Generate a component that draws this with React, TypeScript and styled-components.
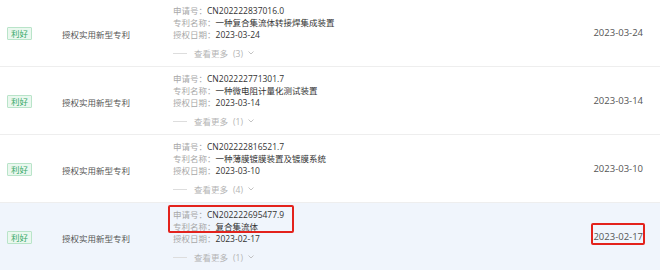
import React from 'react'
import styled, { createGlobalStyle } from 'styled-components'

const GlobalStyle = createGlobalStyle`
  html, body {
    margin: 0;
    padding: 0;
    background: #ffffff;
  }
  body {
    font-family: "Open Sans", "Noto Sans CJK SC", sans-serif;
    overflow: hidden;
  }
`

type Patent = {
  appNo: string
  name: string
  date: string
  more: number
  marked?: boolean
}

const patents: Patent[] = [
  { appNo: 'CN202222837016.0', name: '一种复合集流体转接焊集成装置', date: '2023-03-24', more: 3 },
  { appNo: 'CN202222771301.7', name: '一种微电阻计量化测试装置', date: '2023-03-14', more: 1 },
  { appNo: 'CN202222816521.7', name: '一种薄膜镀膜装置及镀膜系统', date: '2023-03-10', more: 4 },
  { appNo: 'CN202222695477.9', name: '复合集流体', date: '2023-02-17', more: 1, marked: true },
]

const List = styled.div`
  margin-top: -1px;
  width: 660px;
`

const Row = styled.div<{ $active?: boolean }>`
  display: grid;
  grid-template-columns: 55px 111px 1fr auto;
  align-items: center;
  height: 68px;
  box-sizing: border-box;
  padding: 0 17px 0 7px;
  border-bottom: 1px solid ${p => (p.$active ? 'transparent' : '#eeeeee')};
  background: ${p => (p.$active ? '#f0f5fc' : '#ffffff')};
`

const Tag = styled.span`
  justify-self: start;
  display: inline-block;
  width: 25px;
  height: 13px;
  box-sizing: border-box;
  border: 1px solid #b9e4c9;
  border-radius: 1px;
  background: #eaf8ef;
  color: #3aaa6a;
  font-size: 8.5px;
  line-height: 11px;
  text-align: center;
  margin-top: 1px;
`

const TypeText = styled.span`
  color: #555555;
  font-size: 8.5px;
  margin-top: 1px;
`

const Detail = styled.div`
  display: flex;
  flex-direction: column;
  padding: 6px 0 8px;
`

const Line = styled.div`
  height: 12px;
  line-height: 12px;
  font-size: 8.5px;
  color: #333333;
  white-space: nowrap;
`

const Label = styled.span`
  color: #a8a8a8;
`

const Mark = styled.div`
  align-self: flex-start;
  border: 2px solid #e3221c;
  border-radius: 2px;
  margin: -4px 0 0 -5px;
  padding: 2px 3px 0 3px;
  height: 28px;
  box-sizing: border-box;
  width: 126px;
`

const More = styled.div`
  display: flex;
  align-items: center;
  margin-top: 6px;
  height: 12px;
  font-size: 8.5px;
  color: #b4b4b4;
`

const Rule = styled.span`
  width: 14px;
  height: 1px;
  background: #dddddd;
  margin-right: 7px;
`

const Count = styled.span`
  margin-left: 5px;
`

const Chevron = styled.svg`
  margin-left: 5px;
  width: 6px;
  height: 4px;
`

const DateText = styled.span<{ $marked?: boolean }>`
  font-size: 9.5px;
  color: #555555;
  line-height: 12px;
  ${p =>
    p.$marked &&
    `
    border: 2px solid #e3221c;
    border-radius: 2px;
    padding-top: 6px;
    margin: -6px -2px 0 0;
  `}
`

const PatentLines = ({ p }: { p: Patent }) => {
  const head = (
    <>
      <Line>
        <Label>申请号：</Label>
        {p.appNo}
      </Line>
      <Line>
        <Label>专利名称：</Label>
        {p.name}
      </Line>
    </>
  )

  return (
    <Detail>
      {p.marked ? <Mark>{head}</Mark> : head}
      <Line>
        <Label>授权日期：</Label>
        {p.date}
      </Line>
      <More>
        <Rule />
        查看更多
        <Count>({p.more})</Count>
        <Chevron viewBox="0 0 6 4">
          <polyline points="0.5,0.5 3,3 5.5,0.5" fill="none" stroke="#bdbdbd" strokeWidth="0.9" />
        </Chevron>
      </More>
    </Detail>
  )
}

const App = () => {
  return (
    <>
      <GlobalStyle />
      <List>
        {patents.map(p => (
          <Row key={p.appNo} $active={p.marked}>
            <Tag>利好</Tag>
            <TypeText>授权实用新型专利</TypeText>
            <PatentLines p={p} />
            <DateText $marked={p.marked}>{p.date}</DateText>
          </Row>
        ))}
      </List>
    </>
  )
}

export default App
